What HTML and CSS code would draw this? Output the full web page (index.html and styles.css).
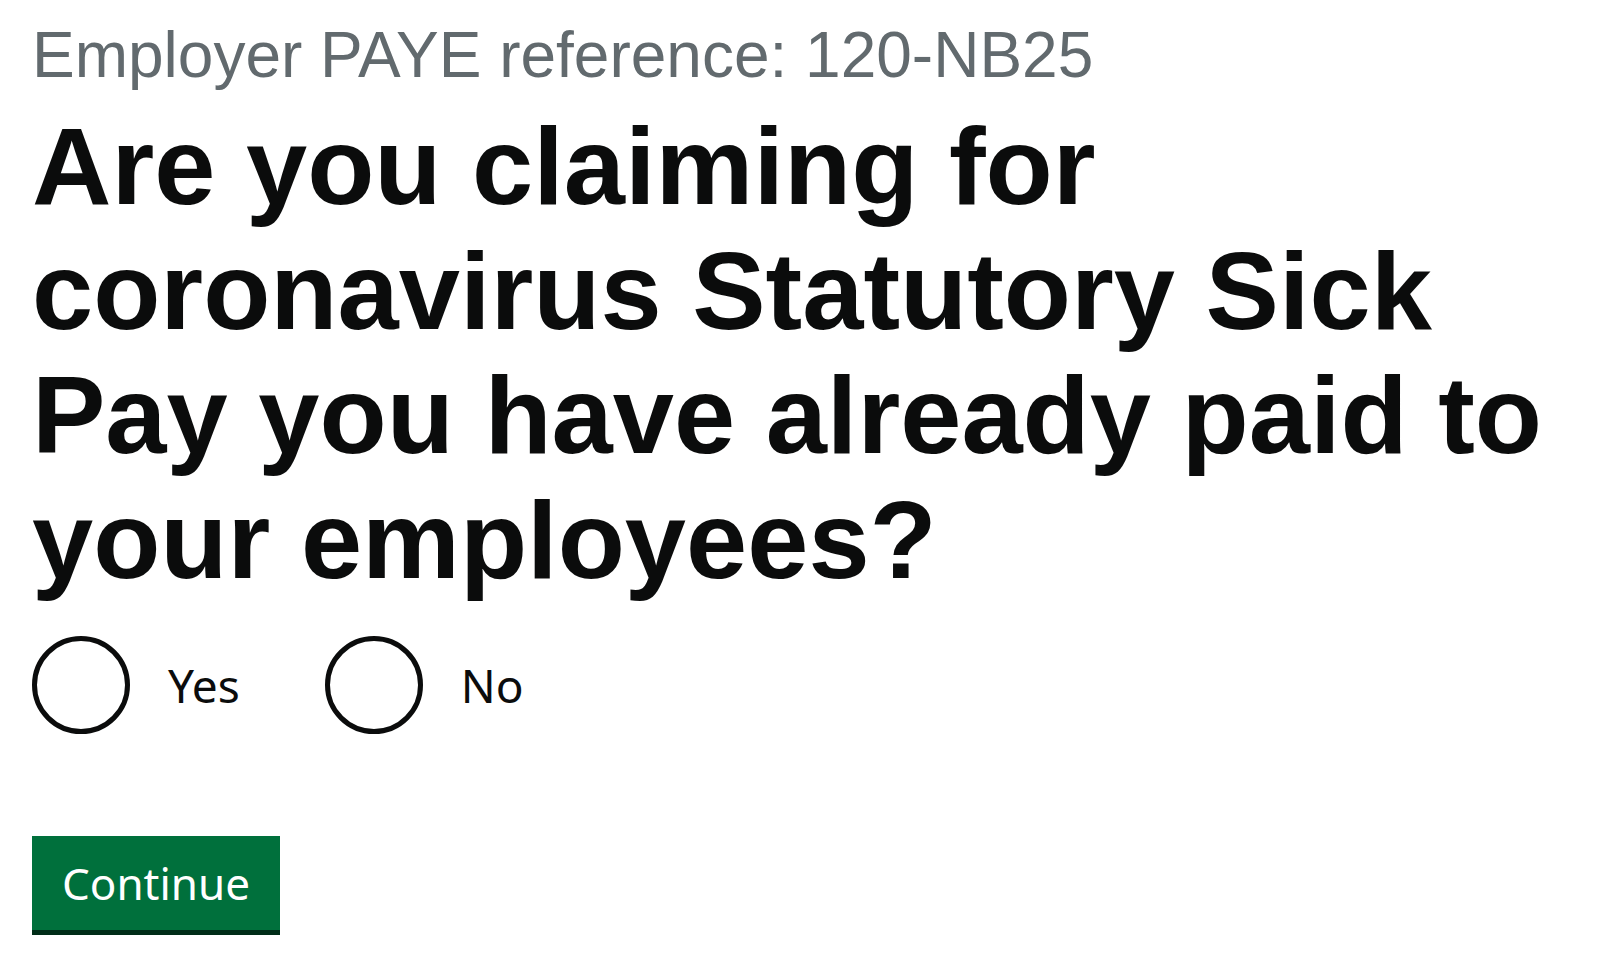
FILE: index.html
```html
<!DOCTYPE html>
<html>
<head>
    <title>Statutory Sick Pay claim</title>
    <link rel="stylesheet" href="styles.css">
</head>
<body>
    <main class="page">
        <form id="sspForm">
            <span class="caption">Employer PAYE reference: 120-NB25</span>
            <h1 class="heading">Are you claiming for coronavirus Statutory Sick Pay you have already paid to your employees?</h1>
            <div class="radios">
                <label class="radio-item">
                    <input type="radio" name="claiming" value="yes">
                    <span class="radio-label">Yes</span>
                </label>
                <label class="radio-item">
                    <input type="radio" name="claiming" value="no">
                    <span class="radio-label">No</span>
                </label>
            </div>
            <button type="submit" class="button">Continue</button>
        </form>
    </main>
</body>
</html>
```

FILE: styles.css
```css
body {
    margin: 0;
    background-color: #ffffff;
    color: #0b0c0c;
    font-family: "Liberation Sans", Arial, sans-serif;
}

.page {
    padding: 20px 32px;
}

.caption {
    display: block;
    color: #626a6e;
    font-size: 64px;
    line-height: 70px;
}

.heading {
    margin: 14px 0 0 0;
    font-size: 110px;
    font-weight: bold;
    line-height: 124.5px;
}

/* radios side by side */
.radios {
    display: flex;
    gap: 85px;
    margin-top: 34px;
}

.radio-item {
    display: flex;
    align-items: center;
    gap: 38px;
    cursor: pointer;
}

.radio-item input {
    appearance: none;
    margin: 0;
    width: 98px;
    height: 98px;
    box-sizing: border-box;
    border: 5px solid #0b0c0c;
    border-radius: 50%;
    background: #ffffff;
}

.radio-label {
    font-family: "Noto Sans", sans-serif;
    font-size: 46px;
}

.button {
    display: flex;
    align-items: center;
    height: 94px;
    margin-top: 102px;
    padding: 0 30px;
    background-color: #00703c;
    color: #ffffff;
    border: 0;
    border-radius: 0;
    box-shadow: 0 5px 0 #002d18;
    font-family: "Noto Sans", sans-serif;
    font-size: 44px;
    cursor: pointer;
}
```
